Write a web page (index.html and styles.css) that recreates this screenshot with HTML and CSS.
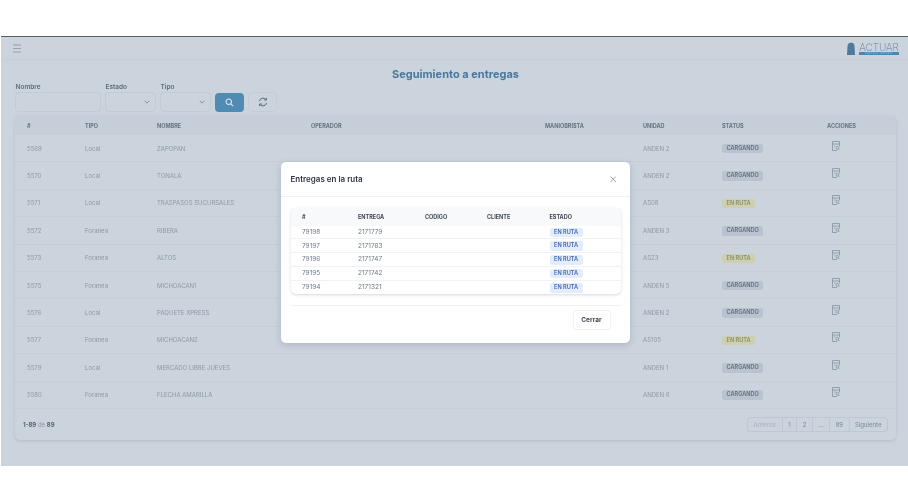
FILE: index.html
```html
<!DOCTYPE html>
<html lang="en">
<head>
    <meta charset="UTF-8">
    <meta name="viewport" content="width=device-width, initial-scale=1.0">
    <title>Seguimiento a entregas</title>
    <link rel="stylesheet" href="styles.css">
</head>
<body>
    <div class="app">
        <header class="topbar">
            <svg class="menu-icon" viewBox="0 0 10 9"><path d="M1 1h8M1 4.5h8M1 8h8"/></svg>
            <div class="logo">
                <svg class="logo-mark" viewBox="0 0 8 13"><path d="M0 13L.6 3.5 1.5 1.5 4 .5 6.5 1.5 7.4 3.5 8 13Z"/></svg>
                <div class="logo-text">
                    <div class="logo-name">ACTUAR</div>
                    <div class="logo-bar">LOGISTICA INTEGRAL</div>
                </div>
            </div>
        </header>

        <main class="content">
            <h1 class="page-title">Seguimiento a entregas</h1>

            <div class="filters">
                <div class="field field-name">
                    <label>Nombre</label>
                    <div class="input"></div>
                </div>
                <div class="field field-select">
                    <label>Estado</label>
                    <div class="input"><svg class="chevron" viewBox="0 0 8 5"><path d="M1 1l3 3 3-3"/></svg></div>
                </div>
                <div class="field field-select">
                    <label>Tipo</label>
                    <div class="input"><svg class="chevron" viewBox="0 0 8 5"><path d="M1 1l3 3 3-3"/></svg></div>
                </div>
                <button class="btn-search">
                    <svg viewBox="0 0 10 10"><circle cx="4.2" cy="4.2" r="3"/><path d="M6.5 6.5L9 9"/></svg>
                </button>
                <button class="btn-reload">
                    <svg viewBox="0 0 12 12"><path d="M1.8 5A4.3 4.3 0 0 1 9.4 3M10.2 7A4.3 4.3 0 0 1 2.6 9"/><path d="M10 1v2.6H7.4M2 11V8.4h2.6"/></svg>
                </button>
            </div>

            <div class="card">
                <div class="row row-head">
                    <span>#</span><span>TIPO</span><span>NOMBRE</span><span>OPERADOR</span><span>MANIOBRISTA</span><span>UNIDAD</span><span>STATUS</span><span>ACCIONES</span>
                </div>
                <div class="row"><span>5569</span><span>Local</span><span>ZAPOPAN</span><span></span><span></span><span>ANDEN 2</span><span class="cell-tag"><b class="tag tag-load">CARGANDO</b></span><span class="action"><svg viewBox="0 0 8 10"><path d="M5 9.5H.5V.5h7v5M.5 3h7M2 5h1.5"/><circle cx="5.3" cy="6.8" r="1.4"/><path d="M6.4 7.9l1.2 1.2"/></svg></span></div>
                <div class="row"><span>5570</span><span>Local</span><span>TONALA</span><span></span><span></span><span>ANDEN 2</span><span class="cell-tag"><b class="tag tag-load">CARGANDO</b></span><span class="action"><svg viewBox="0 0 8 10"><path d="M5 9.5H.5V.5h7v5M.5 3h7M2 5h1.5"/><circle cx="5.3" cy="6.8" r="1.4"/><path d="M6.4 7.9l1.2 1.2"/></svg></span></div>
                <div class="row"><span>5571</span><span>Local</span><span>TRASPASOS SUCURSALES</span><span></span><span></span><span>AS08</span><span class="cell-tag"><b class="tag tag-route">EN RUTA</b></span><span class="action"><svg viewBox="0 0 8 10"><path d="M5 9.5H.5V.5h7v5M.5 3h7M2 5h1.5"/><circle cx="5.3" cy="6.8" r="1.4"/><path d="M6.4 7.9l1.2 1.2"/></svg></span></div>
                <div class="row"><span>5572</span><span>Foranea</span><span>RIBERA</span><span></span><span></span><span>ANDEN 3</span><span class="cell-tag"><b class="tag tag-load">CARGANDO</b></span><span class="action"><svg viewBox="0 0 8 10"><path d="M5 9.5H.5V.5h7v5M.5 3h7M2 5h1.5"/><circle cx="5.3" cy="6.8" r="1.4"/><path d="M6.4 7.9l1.2 1.2"/></svg></span></div>
                <div class="row"><span>5573</span><span>Foranea</span><span>ALTOS</span><span></span><span></span><span>AS23</span><span class="cell-tag"><b class="tag tag-route">EN RUTA</b></span><span class="action"><svg viewBox="0 0 8 10"><path d="M5 9.5H.5V.5h7v5M.5 3h7M2 5h1.5"/><circle cx="5.3" cy="6.8" r="1.4"/><path d="M6.4 7.9l1.2 1.2"/></svg></span></div>
                <div class="row"><span>5575</span><span>Foranea</span><span>MICHOACAN1</span><span></span><span></span><span>ANDEN 5</span><span class="cell-tag"><b class="tag tag-load">CARGANDO</b></span><span class="action"><svg viewBox="0 0 8 10"><path d="M5 9.5H.5V.5h7v5M.5 3h7M2 5h1.5"/><circle cx="5.3" cy="6.8" r="1.4"/><path d="M6.4 7.9l1.2 1.2"/></svg></span></div>
                <div class="row"><span>5576</span><span>Local</span><span>PAQUETE XPRESS</span><span></span><span></span><span>ANDEN 2</span><span class="cell-tag"><b class="tag tag-load">CARGANDO</b></span><span class="action"><svg viewBox="0 0 8 10"><path d="M5 9.5H.5V.5h7v5M.5 3h7M2 5h1.5"/><circle cx="5.3" cy="6.8" r="1.4"/><path d="M6.4 7.9l1.2 1.2"/></svg></span></div>
                <div class="row"><span>5577</span><span>Foranea</span><span>MICHOACAN2</span><span></span><span></span><span>AS105</span><span class="cell-tag"><b class="tag tag-route">EN RUTA</b></span><span class="action"><svg viewBox="0 0 8 10"><path d="M5 9.5H.5V.5h7v5M.5 3h7M2 5h1.5"/><circle cx="5.3" cy="6.8" r="1.4"/><path d="M6.4 7.9l1.2 1.2"/></svg></span></div>
                <div class="row"><span>5579</span><span>Local</span><span>MERCADO LIBRE JUEVES</span><span></span><span></span><span>ANDEN 1</span><span class="cell-tag"><b class="tag tag-load">CARGANDO</b></span><span class="action"><svg viewBox="0 0 8 10"><path d="M5 9.5H.5V.5h7v5M.5 3h7M2 5h1.5"/><circle cx="5.3" cy="6.8" r="1.4"/><path d="M6.4 7.9l1.2 1.2"/></svg></span></div>
                <div class="row"><span>5580</span><span>Foranea</span><span>FLECHA AMARILLA</span><span></span><span></span><span>ANDEN 6</span><span class="cell-tag"><b class="tag tag-load">CARGANDO</b></span><span class="action"><svg viewBox="0 0 8 10"><path d="M5 9.5H.5V.5h7v5M.5 3h7M2 5h1.5"/><circle cx="5.3" cy="6.8" r="1.4"/><path d="M6.4 7.9l1.2 1.2"/></svg></span></div>
                <div class="card-footer">
                    <div class="count"><b>1-89</b> de <b>89</b></div>
                    <div class="pager">
                        <span class="muted">Anterior</span><span>1</span><span>2</span><span>...</span><span>89</span><span>Siguiente</span>
                    </div>
                </div>
            </div>
        </main>

        <div class="modal">
            <div class="modal-head">
                <h2>Entregas en la ruta</h2>
                <svg class="close" viewBox="0 0 7 7"><path d="M.5.5l6 6M6.5.5l-6 6"/></svg>
            </div>
            <div class="modal-body">
                <div class="inner-card">
                    <div class="m-row m-head"><span>#</span><span>ENTREGA</span><span>CODIGO</span><span>CLIENTE</span><span>ESTADO</span></div>
                    <div class="m-row"><span>79198</span><span>2171779</span><span></span><span></span><span class="cell-tag"><b class="tag tag-blue">EN RUTA</b></span></div>
                    <div class="m-row"><span>79197</span><span>2171763</span><span></span><span></span><span class="cell-tag"><b class="tag tag-blue">EN RUTA</b></span></div>
                    <div class="m-row"><span>79196</span><span>2171747</span><span></span><span></span><span class="cell-tag"><b class="tag tag-blue">EN RUTA</b></span></div>
                    <div class="m-row"><span>79195</span><span>2171742</span><span></span><span></span><span class="cell-tag"><b class="tag tag-blue">EN RUTA</b></span></div>
                    <div class="m-row"><span>79194</span><span>2171321</span><span></span><span></span><span class="cell-tag"><b class="tag tag-blue">EN RUTA</b></span></div>
                </div>
            </div>
            <div class="modal-foot">
                <button class="btn-close">Cerrar</button>
            </div>
        </div>
    </div>
</body>
</html>
```

FILE: styles.css
```css
* {
    box-sizing: border-box;
}
body {
    margin: 0;
    padding-top: 36px;
    background: white;
    font-family: 'Inter', 'Liberation Sans', sans-serif;
    font-size: 6px;
    color: #8f98a5;
}
/* the reference is a scaled down capture, text is a bit soft */
.app {
    position: relative;
    margin-left: 1px;
    height: 430px;
    background: #cbd3dd;
    border-top: 1px solid #5a5f66;
    filter: blur(0.25px);
}
.topbar {
    height: 23px;
    padding: 0 9px 0 11px;
    display: flex;
    align-items: center;
    justify-content: space-between;
    border-bottom: 1px solid #c6ced9;
}
.menu-icon {
    width: 10px;
    height: 9px;
    fill: none;
    stroke: #8a95a4;
    stroke-width: 0.8;
}
.logo {
    display: flex;
    align-items: center;
    gap: 4px;
}
.logo-mark {
    width: 8px;
    height: 13px;
    fill: #4f7a99;
}
.logo-text {
    width: 40px;
}
.logo-name {
    font-size: 10px;
    line-height: 10px;
    font-weight: 200;
    text-align: center;
    white-space: nowrap;
    color: #66798f;
}
.logo-bar {
    height: 2.5px;
    margin-top: 0.5px;
    background: #4f86b0;
    color: #a9c3d8;
    font-size: 2px;
    line-height: 2.5px;
    text-align: center;
    letter-spacing: 0.4px;
    overflow: hidden;
}

.content {
    padding: 7px 12px 0 14px;
}
.page-title {
    margin: 0;
    font-size: 11px;
    line-height: 15px;
    font-weight: 700;
    text-align: center;
    color: #47799e;
}
.filters {
    display: flex;
    align-items: flex-end;
    gap: 4px;
}
.field label {
    display: block;
    padding-left: 0.5px;
    font-size: 6.5px;
    line-height: 10px;
    font-weight: 600;
    color: #5f6b7d;
}
.field-name {
    width: 86px;
}
.field-select {
    width: 51px;
}
.input {
    height: 20px;
    border: 1px solid #c1cad5;
    border-radius: 4px;
    display: flex;
    align-items: center;
    justify-content: flex-end;
    padding-right: 5px;
}
.chevron {
    width: 6px;
    height: 4px;
    fill: none;
    stroke: #6f7a8a;
    stroke-width: 1;
}
.btn-search, .btn-reload {
    width: 29px;
    height: 19px;
    padding: 0;
    border-radius: 4px;
    display: flex;
    align-items: center;
    justify-content: center;
}
.btn-search {
    border: 0;
    background: #4f8bb3;
}
.btn-search svg {
    width: 9px;
    height: 9px;
    fill: none;
    stroke: #dfe7ee;
    stroke-width: 1.2;
}
.btn-reload {
    height: 20px;
    background: none;
    border: 1px solid #c4ccd7;
}
.btn-reload svg {
    width: 10px;
    height: 10px;
    fill: none;
    stroke: #5a6677;
    stroke-width: 1.2;
}

.card {
    margin-top: 4px;
    border-radius: 5px;
    box-shadow: 0 1px 3px rgba(90, 105, 125, 0.22);
}
.row {
    display: grid;
    grid-template-columns: 58px 72px 154px 234px 98px 79px 105px 1fr;
    align-items: center;
    height: 27.4px;
    padding-left: 12px;
    border-bottom: 1px solid #c5cdd8;
}
.row-head {
    height: 19px;
    background: #c6ced9;
    border-bottom: 0;
    border-radius: 5px 5px 0 0;
    font-weight: 700;
    font-size: 5.5px;
    color: #66717f;
}
.action svg {
    display: block;
    width: 8px;
    height: 10px;
    margin: -5px 0 0 5px;
    fill: none;
    stroke: #7e8998;
    stroke-width: 0.7;
}
.cell-tag {
    display: flex;
    padding-top: 1px;
}
.tag {
    padding: 0 4.5px;
    border-radius: 2.5px;
    font-size: 5.6px;
    line-height: 9.5px;
    font-weight: 600;
}
.tag-load {
    background: #bac2cf;
    color: #616c7d;
}
.tag-route {
    background: #ccd0ae;
    color: #8a8d6e;
}
.tag-blue {
    background: #e3ecfb;
    color: #3f66b5;
}
.card-footer {
    height: 31px;
    padding: 0 8px;
    display: flex;
    align-items: center;
    justify-content: space-between;
}
.count b {
    color: #596372;
    font-weight: 700;
}
.pager {
    display: flex;
    height: 15px;
    border: 1px solid #bec7d2;
    border-radius: 3px;
}
.pager span {
    padding: 0 5.5px;
    line-height: 13px;
    border-left: 1px solid #bec7d2;
    color: #7d8898;
}
.pager span:first-child {
    border-left: 0;
}
.pager .muted {
    color: #aab3bf;
}

.modal {
    position: absolute;
    left: 280px;
    top: 125px;
    width: 349px;
    height: 181px;
    background: white;
    border-radius: 5px;
    box-shadow: 0 2px 6px rgba(80, 95, 115, 0.25);
    font-size: 6.5px;
    color: #6f7987;
}
.modal-head {
    height: 35px;
    padding: 0 14px 0 9.5px;
    border-bottom: 1px solid #eef0f3;
    display: flex;
    align-items: center;
    justify-content: space-between;
}
.modal-head h2 {
    margin: 0;
    font-size: 8px;
    font-weight: 600;
    color: #2e3442;
}
.close {
    width: 6.5px;
    height: 6.5px;
    fill: none;
    stroke: #7f8794;
    stroke-width: 0.8;
}
.modal-body {
    padding: 10.5px 9.5px 0;
}
.inner-card {
    border-radius: 5px;
    box-shadow: 0 1px 3px rgba(60, 70, 90, 0.22);
}
.m-row {
    display: grid;
    grid-template-columns: 56px 67px 62px 62.5px 1fr;
    align-items: center;
    height: 13.75px;
    padding-left: 11.5px;
    border-bottom: 1px solid #f1f2f5;
}
.m-row:last-child {
    border-bottom: 0;
}
.m-head {
    height: 18px;
    background: #f8f9fb;
    border-bottom: 0;
    border-radius: 5px 5px 0 0;
    font-size: 5.5px;
    font-weight: 700;
    color: #3d4553;
}
.modal-foot {
    margin: 11px 9.5px 0;
    padding: 4px 10px 0 0;
    border-top: 1px solid #eef0f3;
    display: flex;
    justify-content: flex-end;
}
.btn-close {
    width: 38px;
    height: 20px;
    padding: 0;
    background: white;
    border: 1px solid #eef0f3;
    border-radius: 4px;
    font-family: inherit;
    font-size: 6.5px;
    font-weight: 700;
    color: #3d4553;
}
```
